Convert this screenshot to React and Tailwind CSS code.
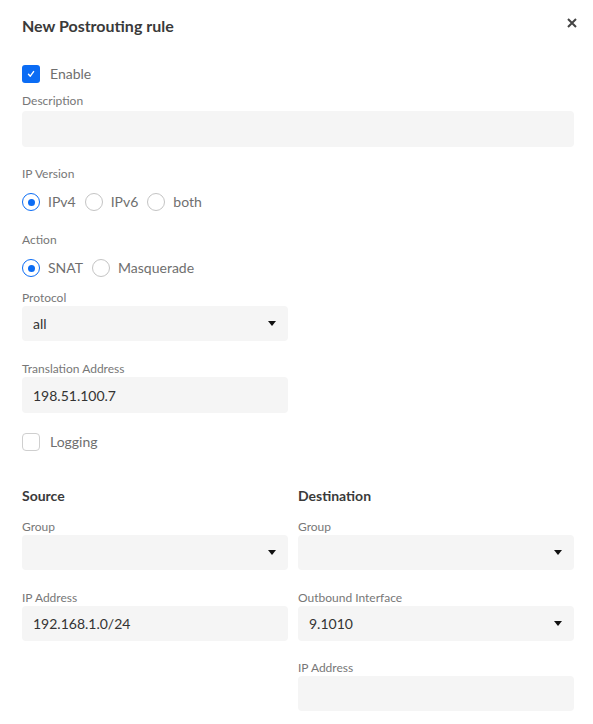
import { useState } from "react";

const font = { fontFamily: "Lato, 'Noto Sans', sans-serif" };

const Caret = () => (
  <svg width="8" height="5" viewBox="0 0 8 5" className="shrink-0">
    <path d="M0 0 H8 L4 5 Z" fill="#111" />
  </svg>
);

const Checkbox = ({ checked, label, onChange }) => (
  <label className="flex items-center h-[18px] cursor-pointer" onClick={onChange}>
    {checked ? (
      <span className="w-[18px] h-[18px] rounded-[3px] bg-[#0b6cf4] flex items-center justify-center">
        <svg width="10" height="10" viewBox="0 0 10 10">
          <path d="M2.5 5.2 L4.3 7.2 L7.6 2.6" stroke="#fff" strokeWidth="1.4" fill="none" strokeLinecap="round" strokeLinejoin="round" />
        </svg>
      </span>
    ) : (
      <span className="w-[18px] h-[18px] rounded-[4px] border border-[#cfcfcf] bg-white" />
    )}
    <span className="ml-[10px] text-[14px] leading-[18px] text-[#6f6f6f]">{label}</span>
  </label>
);

const Radio = ({ checked, label, onClick }) => (
  <label className="flex items-center h-[18px] mr-[9px] cursor-pointer" onClick={onClick}>
    {checked ? (
      <span className="w-[18px] h-[18px] rounded-full border-[1.5px] border-[#0b6cf4] flex items-center justify-center">
        <span className="w-[7px] h-[7px] rounded-full bg-[#0b6cf4]" />
      </span>
    ) : (
      <span className="w-[18px] h-[18px] rounded-full border border-[#c4c4c4]" />
    )}
    <span className="ml-[8px] text-[14px] leading-[18px] text-[#6f6f6f]">{label}</span>
  </label>
);

const Label = ({ children }) => (
  <div className="h-[16px] leading-[16px] text-[12px] text-[#777]">{children}</div>
);

const Input = ({ value, h = "h-[35px]" }) => (
  <div className={`${h} bg-[#f5f5f5] rounded-[4px] px-[11px] flex items-center text-[14px] text-[#333]`}>
    {value}
  </div>
);

const Select = ({ value }) => (
  <div className="h-[35px] bg-[#f5f5f5] rounded-[4px] pl-[11px] pr-[12px] flex items-center justify-between text-[14px] text-[#333]">
    <span>{value}</span>
    <Caret />
  </div>
);

export default function App() {
  const [enabled, setEnabled] = useState(true);
  const [logging, setLogging] = useState(false);
  const [ipv, setIpv] = useState("IPv4");
  const [action, setAction] = useState("SNAT");

  return (
    <div className="w-[593px] min-h-[724px] bg-white pl-[22px] pr-[19px] pt-[14px]" style={font}>
      {/* Header */}
      <div className="flex items-center justify-between h-[24px]">
        <h1 className="text-[16px] font-bold text-[#3a3a3a]">New Postrouting rule</h1>
        <button className="mr-[-3px] mt-[-6px]">
          <svg width="10" height="10" viewBox="0 0 10 10">
            <path d="M1 1 L9 9 M9 1 L1 9" stroke="#444" strokeWidth="2" />
          </svg>
        </button>
      </div>

      <div className="mt-[27px]">
        <Checkbox checked={enabled} label="Enable" onChange={() => setEnabled(!enabled)} />
      </div>

      <div className="mt-[10px]">
        <Label>Description</Label>
        <div className="mt-[2px]">
          <Input value="" h="h-[36px]" />
        </div>
      </div>

      <div className="mt-[19px]">
        <Label>IP Version</Label>
        <div className="flex mt-[11px]">
          {["IPv4", "IPv6", "both"].map((v) => (
            <Radio key={v} label={v} checked={ipv === v} onClick={() => setIpv(v)} />
          ))}
        </div>
      </div>

      <div className="mt-[21px]">
        <Label>Action</Label>
        <div className="flex mt-[11px]">
          {["SNAT", "Masquerade"].map((v) => (
            <Radio key={v} label={v} checked={action === v} onClick={() => setAction(v)} />
          ))}
        </div>
      </div>

      <div className="mt-[13px] w-[266px]">
        <Label>Protocol</Label>
        <Select value="all" />
      </div>

      <div className="mt-[20px] w-[266px]">
        <Label>Translation Address</Label>
        <Input value="198.51.100.7" h="h-[36px]" />
      </div>

      <div className="mt-[20px]">
        <Checkbox checked={logging} label="Logging" onChange={() => setLogging(!logging)} />
      </div>

      <div className="mt-[35px] grid grid-cols-[266px_276px] gap-x-[10px]">
        <div>
          <div className="h-[20px] leading-[20px] text-[14px] font-bold text-[#3a3a3a]">Source</div>
          <div className="mt-[13px]">
            <Label>Group</Label>
            <Select value="" />
          </div>
          <div className="mt-[20px]">
            <Label>IP Address</Label>
            <Input value="192.168.1.0/24" />
          </div>
        </div>
        <div>
          <div className="h-[20px] leading-[20px] text-[14px] font-bold text-[#3a3a3a]">Destination</div>
          <div className="mt-[13px]">
            <Label>Group</Label>
            <Select value="" />
          </div>
          <div className="mt-[20px]">
            <Label>Outbound Interface</Label>
            <Select value="9.1010" />
          </div>
          <div className="mt-[19px]">
            <Label>IP Address</Label>
            <Input value="" />
          </div>
        </div>
      </div>
    </div>
  );
}
